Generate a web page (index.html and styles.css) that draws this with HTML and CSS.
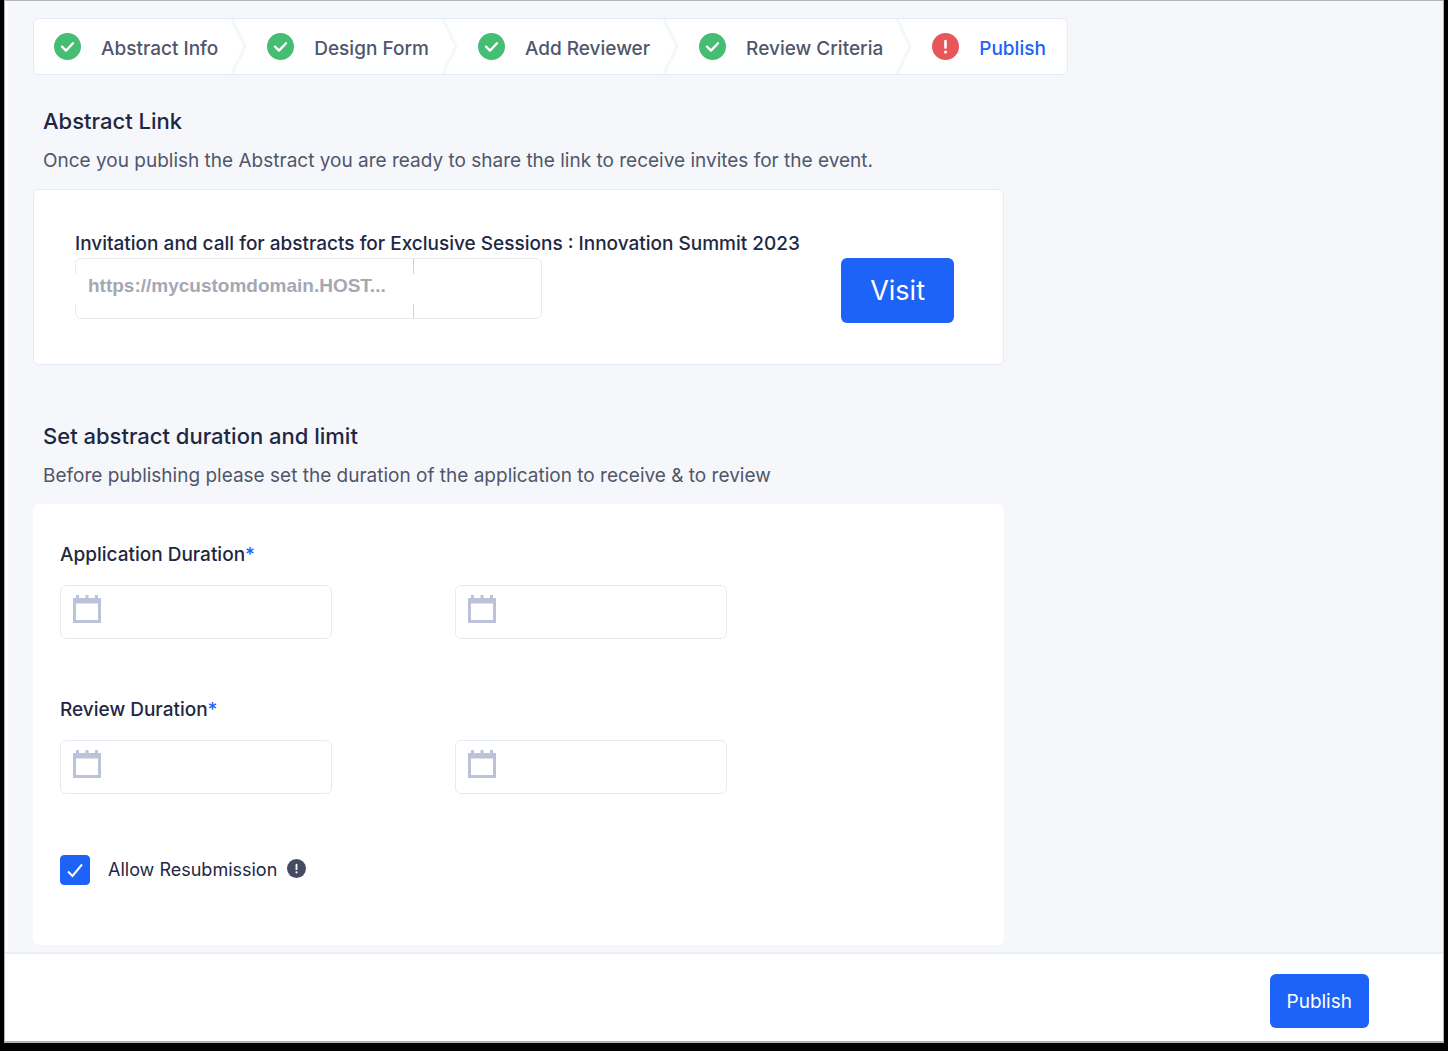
FILE: index.html
```html
<!DOCTYPE html>
<html lang="en">
<head>
  <meta charset="UTF-8">
  <meta name="viewport" content="width=device-width, initial-scale=1">
  <title>Publish Abstract</title>
  <link rel="stylesheet" href="styles.css">
</head>
<body>
  <svg class="icon-defs" aria-hidden="true">
    <symbol id="icon-done" viewBox="0 0 27 27">
      <circle cx="13.5" cy="13.5" r="13.5" fill="#45bd72"/>
      <path d="M8 13.6l4 4 7-7.4" fill="none" stroke="#fff" stroke-width="2.3" stroke-linecap="round" stroke-linejoin="round"/>
    </symbol>
    <symbol id="icon-alert" viewBox="0 0 27 27">
      <circle cx="13.5" cy="13.5" r="13.5" fill="currentColor"/>
      <path d="M13.5 8v6.5" stroke="#fff" stroke-width="2.6" stroke-linecap="round"/>
      <circle cx="13.5" cy="19" r="1.5" fill="#fff"/>
    </symbol>
    <symbol id="icon-calendar" viewBox="0 0 28 28">
      <path d="M0 3h3V0h3v3h6.500V0h3v3H22V0h3v3h3v25H0zM3 8.500V25h22V8.500z" fill="#bcc3d9" fill-rule="evenodd"/>
    </symbol>
    <symbol id="icon-chevron" viewBox="0 0 16 55" preserveAspectRatio="none">
      <path d="M1 0l13 27.500L1 55" fill="none" stroke="#f5f7fa" stroke-width="3"/>
    </symbol>
  </svg>

  <div class="page">
    <main class="content">
      <nav class="stepper">
        <a href="#" class="step">
          <svg class="step-icon"><use href="#icon-done"/></svg>
          <span>Abstract Info</span>
          <svg class="step-chevron"><use href="#icon-chevron"/></svg>
        </a>
        <a href="#" class="step">
          <svg class="step-icon"><use href="#icon-done"/></svg>
          <span>Design Form</span>
          <svg class="step-chevron"><use href="#icon-chevron"/></svg>
        </a>
        <a href="#" class="step">
          <svg class="step-icon"><use href="#icon-done"/></svg>
          <span>Add Reviewer</span>
          <svg class="step-chevron"><use href="#icon-chevron"/></svg>
        </a>
        <a href="#" class="step">
          <svg class="step-icon"><use href="#icon-done"/></svg>
          <span>Review Criteria</span>
          <svg class="step-chevron"><use href="#icon-chevron"/></svg>
        </a>
        <a href="#" class="step active">
          <svg class="step-icon"><use href="#icon-alert"/></svg>
          <span>Publish</span>
        </a>
      </nav>

      <section class="section">
        <h2>Abstract Link</h2>
        <p class="section-text">Once you publish the Abstract you are ready to share the link to receive invites for the event.</p>
        <div class="card link-card">
          <div class="link-info">
            <label for="inviteUrl" class="label">Invitation and call for abstracts for Exclusive Sessions : Innovation Summit 2023</label>
            <div class="url-box">
              <input type="text" id="inviteUrl" class="url-input" value="https://mycustomdomain.HOST..." readonly>
              <div class="url-side"></div>
            </div>
          </div>
          <button type="button" class="button visit-button">Visit</button>
        </div>
      </section>

      <section class="section">
        <h2>Set abstract duration and limit</h2>
        <p class="section-text">Before publishing please set the duration of the application to receive &amp; to review</p>
        <form class="card duration-card" id="durationForm">
          <div class="field">
            <label for="applicationStart" class="label">Application Duration<span class="required">*</span></label>
            <div class="date-row">
              <div class="date-box">
                <svg class="calendar"><use href="#icon-calendar"/></svg>
                <input type="text" id="applicationStart">
              </div>
              <div class="date-box">
                <svg class="calendar"><use href="#icon-calendar"/></svg>
                <input type="text" id="applicationEnd" aria-label="Application end">
              </div>
            </div>
          </div>
          <div class="field">
            <label for="reviewStart" class="label">Review Duration<span class="required">*</span></label>
            <div class="date-row">
              <div class="date-box">
                <svg class="calendar"><use href="#icon-calendar"/></svg>
                <input type="text" id="reviewStart">
              </div>
              <div class="date-box">
                <svg class="calendar"><use href="#icon-calendar"/></svg>
                <input type="text" id="reviewEnd" aria-label="Review end">
              </div>
            </div>
          </div>
          <div class="resubmission">
            <span class="checkbox">
              <input type="checkbox" id="resubmission" checked>
              <svg viewBox="0 0 30 30"><path d="M8 16.500l4.500 4.500 9.500-11.500" fill="none" stroke="#fff" stroke-width="2"/></svg>
            </span>
            <label for="resubmission">Allow Resubmission</label>
            <svg class="info-icon"><use href="#icon-alert"/></svg>
          </div>
        </form>
      </section>
    </main>

    <footer class="footer">
      <button type="submit" form="durationForm" class="button">Publish</button>
    </footer>
  </div>
</body>
</html>
```

FILE: styles.css
```css
* {
  box-sizing: border-box;
}

body {
  display: flex;
  min-height: 100vh;
  margin: 0;
  padding: 0 4px 8px;
  background-color: #000000;
  font-family: 'Inter', sans-serif;
  font-size: 19px;
  line-height: 24px;
  color: #1e2843;
}

.icon-defs {
  position: absolute;
  width: 0;
  height: 0;
}

.page {
  flex: 1;
  display: flex;
  flex-direction: column;
  border: 1px solid #b3b3b7;
  border-bottom-width: 2px;
  background-color: #ffffff;
}

.content {
  flex: 1;
  margin-left: 3px;
  padding: 17px 25px 7px;
  background-color: #f6f7fa;
}

.stepper {
  display: flex;
  width: fit-content;
  height: 57px;
  padding-right: 21px;
  border: 1px solid #e4ecf3;
  border-radius: 6px;
  background-color: #ffffff;
}

.step {
  display: flex;
  align-items: center;
  padding-left: 20px;
  color: #50566b;
  font-weight: 500;
  text-decoration: none;
}

.step span {
  padding: 4px 0 0 20px;
}

.step.active {
  color: #1d63f7;
}

.step-icon {
  width: 27px;
  height: 27px;
  color: #e85659;
}

.step-chevron {
  width: 16px;
  height: 55px;
  margin-left: 13px;
}

h2 {
  margin: 0 0 16px;
  padding-left: 10px;
  font-size: 22px;
  line-height: 24px;
  font-weight: 500;
}

.section {
  max-width: 971px;
  margin-top: 34px;
}

.section + .section {
  margin-top: 59px;
}

.section-text {
  margin: 0 0 16px;
  padding-left: 10px;
  color: #50566b;
}

.card {
  border: 1px solid #e4ecf3;
  border-radius: 6px;
  background-color: #ffffff;
}

.label {
  display: block;
  font-weight: 500;
}

.link-card {
  display: flex;
  align-items: flex-end;
  justify-content: space-between;
  padding: 42px 49px 41px 41px;
}

.url-box {
  display: flex;
  align-items: center;
  width: 467px;
  height: 61px;
  margin: 2px 0 4px;
  border: 1px solid #e4ecf3;
  border-radius: 6px;
}

/* the input covers the left border and the divider */
.url-input {
  position: relative;
  width: 339px;
  height: 30px;
  margin: 0 -1px;
  padding: 0 0 6px 13px;
  border: 0;
  outline: 0;
  background-color: #ffffff;
  font: bold 19px 'Liberation Sans', sans-serif;
  color: #a5a7b3;
}

.url-side {
  flex: 1;
  align-self: stretch;
  border-left: 1px solid #cdd0d6;
}

.button {
  height: 54px;
  padding: 0 17px;
  border: 0;
  border-radius: 6px;
  background-color: #1d63f7;
  color: #ffffff;
  font-family: inherit;
  font-size: 19px;
  cursor: pointer;
}

.visit-button {
  height: 65px;
  padding: 0 29px;
  font-size: 27px;
}

.duration-card {
  padding: 38px 26px 59px;
  border-color: #ffffff;
}

.field {
  margin-bottom: 59px;
}

.required {
  color: #1d63f7;
}

.date-row {
  display: flex;
  gap: 123px;
  margin-top: 18px;
}

.date-box {
  display: flex;
  width: 272px;
  height: 54px;
  padding: 9px 12px;
  border: 1px solid #e4ecf3;
  border-radius: 6px;
}

.date-box input {
  flex: 1;
  min-width: 0;
  padding: 0 12px;
  border: 0;
  outline: 0;
  background: none;
  font: inherit;
  color: inherit;
}

.calendar {
  width: 28px;
  height: 28px;
}

.resubmission {
  display: flex;
  align-items: center;
  padding-top: 2px;
  font-size: 18px;
}

.checkbox {
  display: grid;
  width: 30px;
  height: 30px;
  margin-right: 18px;
}

.checkbox input,
.checkbox svg {
  grid-area: 1 / 1;
  width: 30px;
  height: 30px;
  margin: 0;
}

.checkbox input {
  appearance: none;
  border: 1px solid #1d63f7;
  border-radius: 4px;
}

.checkbox input:checked {
  background-color: #1d63f7;
}

.checkbox svg {
  pointer-events: none;
}

.info-icon {
  width: 19px;
  height: 19px;
  margin: 0 0 4px 10px;
  color: #454b61;
}

.footer {
  display: flex;
  justify-content: flex-end;
  padding: 20px 74px 13px;
  border-top: 2px solid #e9eef4;
}
```
